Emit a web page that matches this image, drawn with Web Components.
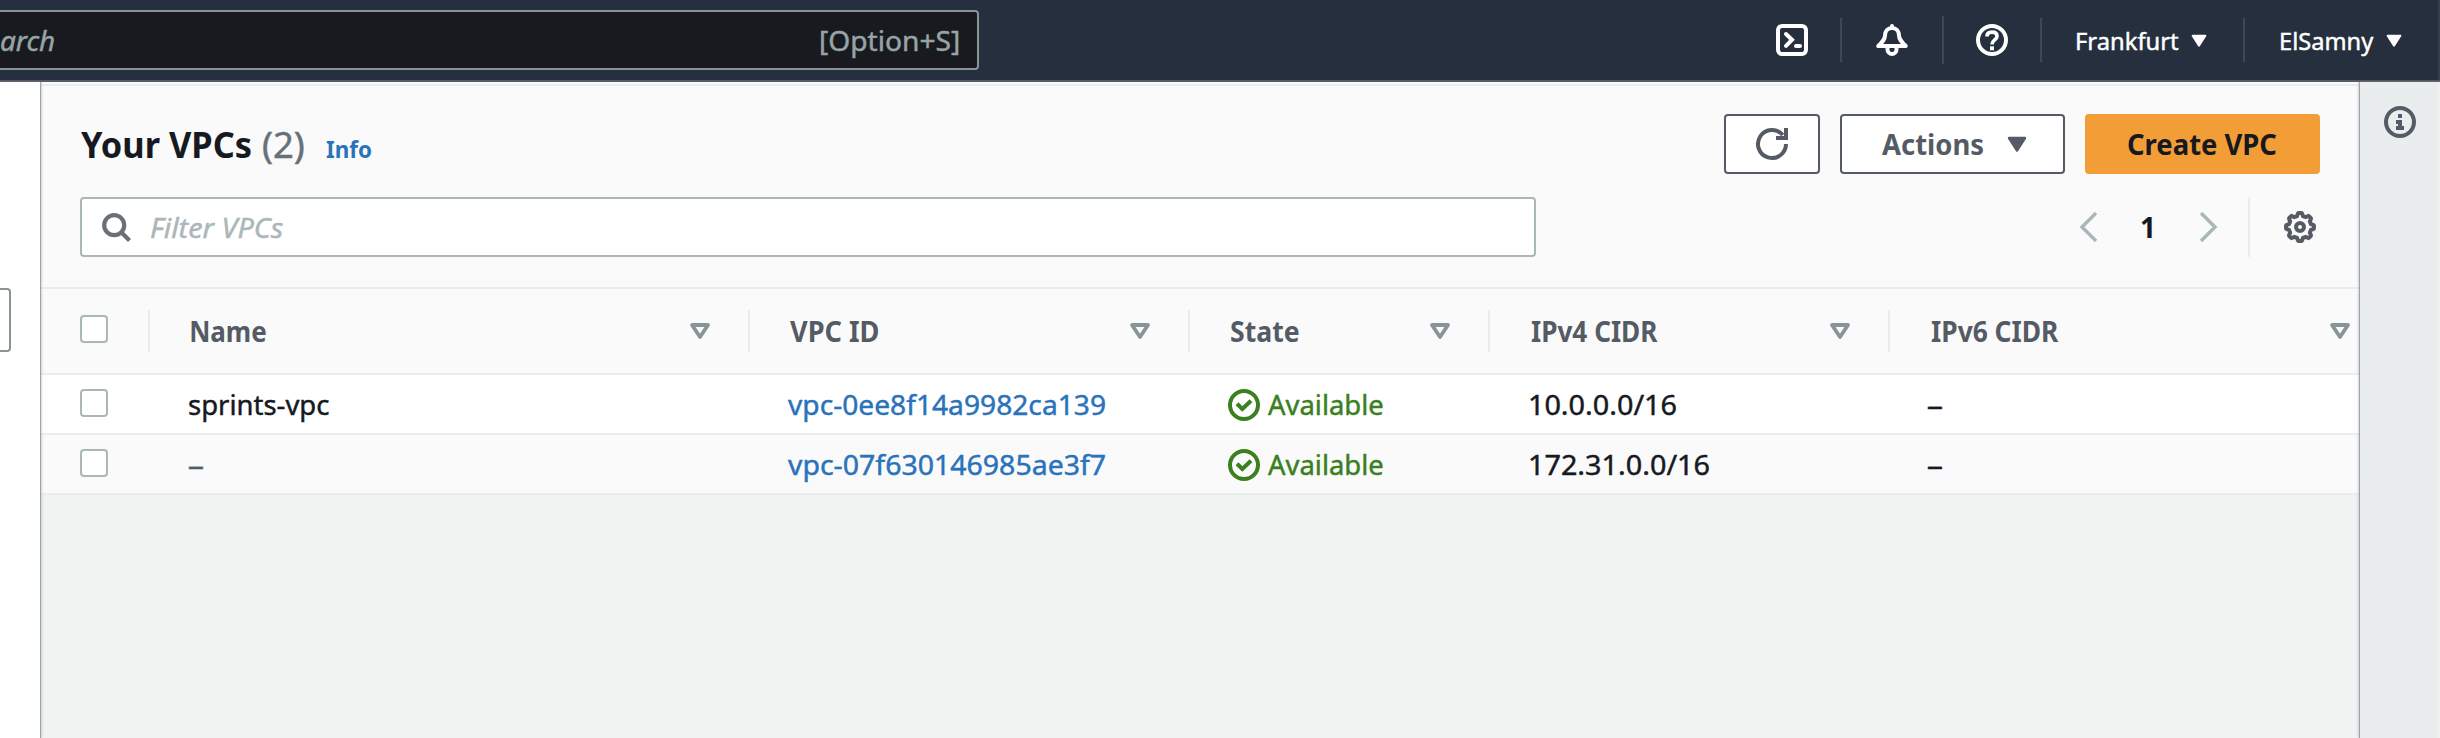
<!DOCTYPE html>
<html lang="en"><head><meta charset="utf-8"><title>Your VPCs</title>
<style>
html,body{margin:0;height:100%;overflow:hidden}
body{font-family:"Noto Sans","Open Sans",sans-serif;font-size:28px;color:#16191f}
</style></head><body>
<vpc-console></vpc-console>
<script>
const define=(name,html,setup)=>customElements.define(name,class extends HTMLElement{
  connectedCallback(){
    if(this.shadowRoot)return;
    const t=document.createElement('template');
    t.innerHTML=html;
    this.attachShadow({mode:'open'}).appendChild(t.content.cloneNode(true));
    if(setup)setup(this,this.shadowRoot);
  }
});

// Text run set to a given ink width.
const ctx=document.createElement('canvas').getContext('2d');
define('ui-text',`<style>:host{display:block;flex:none;white-space:pre}span{display:inline-block;transform-origin:0 0}.regular{-webkit-text-stroke:.45px currentColor}</style><span><slot></slot></span>`,(el,root)=>{
  const cs=getComputedStyle(el),w=+el.getAttribute('w'),span=root.querySelector('span');
  ctx.font=`${cs.fontStyle} ${cs.fontWeight} ${cs.fontSize} ${cs.fontFamily}`;
  const m=ctx.measureText(el.textContent),l=m.actualBoundingBoxLeft,s=w/(l+m.actualBoundingBoxRight);
  el.style.width=w+'px';
  span.style.transform=`translateX(${l*s}px) scaleX(${s})`;
  if(+cs.fontWeight<600)span.className='regular';
});

const gear=(()=>{
  let d='';
  for(let i=0;i<96;i++){
    const a=i/96*2*Math.PI,c=Math.cos(8*a),r=12.6+1.4*Math.tanh(2.6*c)/Math.tanh(2.6);
    d+=(i?'L':'M')+(16+r*Math.sin(a)).toFixed(2)+' '+(16-r*Math.cos(a)).toFixed(2);
  }
  return d+'Z';
})();
const icons={
  terminal:'<rect x="2" y="2" width="28" height="28" rx="4"/><path d="M10 10l6 5.8-6 6" stroke-linecap="round"/><path d="M20 22h4" stroke-linecap="round"/>',
  bell:'<path d="M16 2v2" stroke-linecap="round"/><path d="M16 4C11.6 4 9.2 7.3 9.1 11 9 15.5 6.2 18.2 2.2 22H29.8C25.8 18.2 23 15.5 22.9 11 22.8 7.3 20.4 4 16 4Z" stroke-linejoin="round"/><path d="M11.5 23v2.5a4.5 4.5 0 0 0 9 0V23"/>',
  help:'<circle cx="16" cy="16" r="14"/><path d="M11 12.4C11 9.6 13 8.1 16 8.1s5 1.5 5 4.1c0 3.8-5 3.6-5 8.2" stroke-width="3.7"/><path d="M14 24.3h4"/>',
  refresh:'<path d="M30 16A14 14 0 1 1 26.8 7.1"/><path d="M30 0v10H20"/>',
  search:'<circle cx="12.2" cy="12.2" r="10" stroke-width="4.2"/><path d="M19 19l8.5 8.5" stroke-width="4.2"/>',
  left:'<path d="M17 2L3 16l14 14" stroke-width="3.4"/>',
  right:'<path d="M2 2l14 14L2 30" stroke-width="3.4"/>',
  gear:`<path d="${gear}"/><circle cx="16" cy="16" r="4"/>`,
  info:'<circle cx="16" cy="16" r="14"/><path d="M14 8h4v4h-4zM12 14h6v6h2v4h-8v-4h2v-2h-2z" fill="currentColor" stroke="none"/>',
  check:'<circle cx="16" cy="16" r="14"/><path d="M9 14.8l5.3 5.2 8.7-8.3"/>',
  caret:'<path d="M2 2h16l-8 12.5z" fill="currentColor" stroke-width="2.4" stroke-linejoin="round"/>',
  sort:'<path d="M2 2h16l-8 12z" stroke-linejoin="round" stroke-width="3.8"/>'
};
define('ui-icon',`<style>:host{display:block;flex:none;width:32px;height:32px}svg{display:block;width:100%;height:100%;overflow:visible}</style><svg fill="none" stroke="currentColor" stroke-width="4"></svg>`,(el,root)=>{
  const n=el.getAttribute('name'),svg=root.querySelector('svg');
  svg.setAttribute('viewBox',{caret:'0 0 20 16',sort:'0 0 20 16',left:'0 0 20 32',right:'0 0 20 32'}[n]||'0 0 32 32');
  svg.innerHTML=icons[n];
});

define('ui-checkbox','<style>:host{display:block;box-sizing:border-box;width:28px;height:28px;border:2px solid #aab7b8;border-radius:4px;background:#fff}</style>');

define('ui-button','<style>:host{display:flex;box-sizing:border-box;height:60px;border:2px solid #545b64;border-radius:4px;background:#fff;color:#545b64;font-weight:700;align-items:center;line-height:54px}:host([primary]){background:#f39d37;border-color:#f39d37;color:#16191f}</style><slot></slot>');

define('console-nav',`<style>
:host{display:flex;box-sizing:border-box;height:82px;background:#252f3e;border-bottom:2px solid #545b64;align-items:center;color:#fff;font-size:24px;position:relative}
.search{box-sizing:border-box;width:979px;height:60px;border:2px solid #879596;border-left:0;border-radius:0 4px 4px 0;background:#191a1f;color:#95a5a6;font-size:28px;display:flex;justify-content:space-between;align-items:center;padding-right:19px}
.search i{margin-left:.5px}
.grow{flex:1}
b{width:2px;height:44px;background:#414750;flex:none}
.caret{width:16px;height:13px}
.edge{position:absolute;right:0;top:0;width:2px;height:80px;background:#36404d}
</style>
<div class="search"><i><ui-text w="53">arch</ui-text></i><ui-text w="137">[Option+S]</ui-text></div>
<div class="grow"></div>
<ui-icon name="terminal"></ui-icon><b style="margin:0 34px 0 32px"></b>
<ui-icon name="bell"></ui-icon><b style="margin:0 32px 0 34px;height:48px"></b>
<ui-icon name="help"></ui-icon><b style="margin:0 35px 0 32px"></b>
<ui-text w="102">Frankfurt</ui-text><ui-icon class="caret" name="caret" style="margin-left:12px"></ui-icon><b style="margin:0 36px"></b>
<ui-text w="93">ElSamny</ui-text><ui-icon class="caret" name="caret" style="margin:0 38px 0 12px"></ui-icon>
<div class="edge"></div>`);

define('console-side','<style>:host{display:flow-root;width:40px;flex:none;background:#fff;box-shadow:1px 0 1px #9aa5ab,2px 0 3px #0000001c;position:relative;z-index:1}div{box-sizing:border-box;width:11px;height:64px;margin-top:206px;border:2px solid #879596;border-left:0;border-radius:0 4px 4px 0}</style><div></div>');
define('console-help','<style>:host{display:flow-root;box-sizing:border-box;width:80px;flex:none;background:#eaeded;box-shadow:-1px 0 1px #9aa5ab,-2px 0 3px #0000001c;position:relative;z-index:1;color:#545b64;border-right:2px solid #f0f2f2}ui-icon{margin:24px 0 0 24px}</style><ui-icon name="info"></ui-icon>');

define('vpc-toolbar',`<style>
:host{display:flow-root;box-sizing:border-box;height:203px;background:#fafafa;padding:28px 40px 0;border-bottom:2px solid #eaeded}
.top,.bottom,.title,.right,.filter{display:flex;align-items:center}
.top,.bottom{justify-content:space-between;height:60px}
.bottom{margin-top:23px}
.title{align-items:baseline;font-size:36px;line-height:56px;padding:5px 0 0 1px}
.count{color:#687078;margin:0 22px 0 12px}
.info{font-size:24px;font-weight:700;color:#2a73bb}
.filter{box-sizing:border-box;width:1456px;height:60px;border:2px solid #aab7b8;border-radius:4px;background:#fff;color:#aab7b8;font-style:italic;padding-left:20px}
.filter ui-icon{color:#687078;margin:4px 17px 0 0}
.buttons{gap:20px}
.chev{width:20px;height:32px;color:#aab7b8}
.sep{width:2px;height:60px;background:#eaeded}
</style>
<div class="top"><div class="title"><ui-text w="170" style="font-weight:700">Your VPCs</ui-text><ui-text class="count" w="41">(2)</ui-text><ui-text class="info" w="45">Info</ui-text></div>
<div class="right buttons"><ui-button style="width:96px;justify-content:center;color:#545b64"><ui-icon name="refresh"></ui-icon></ui-button>
<ui-button style="width:225px;padding-left:40px"><ui-text w="101">Actions</ui-text><ui-icon name="caret" style="width:20px;height:16px;margin-left:24px"></ui-icon></ui-button>
<ui-button primary style="width:235px;padding-left:41px"><ui-text w="149">Create VPC</ui-text></ui-button></div></div>
<div class="bottom"><div class="filter"><ui-icon name="search"></ui-icon><ui-text w="132">Filter VPCs</ui-text></div>
<div class="right"><ui-icon class="chev" name="left"></ui-icon><ui-text w="11" style="font-weight:700;margin:0 47px 0 42px;line-height:56px">1</ui-text><ui-icon class="chev" name="right"></ui-icon><div class="sep" style="margin:0 34px 0 29px"></div><ui-icon name="gear" style="margin-right:4px;color:#545b64"></ui-icon></div></div>`);

const head=(t,w,pl,pr=38)=>`<div class="h" style="padding:0 ${pr}px 0 ${pl}px"><ui-text w="${w}">${t}</ui-text><ui-icon name="sort"></ui-icon></div>`;
const row=(name,id,cidr,cw,alt)=>`<div class="row ${alt?'alt':''}"><div class="cb"><ui-checkbox></ui-checkbox></div>
<div class="c" style="padding-left:38.5px">${name}</div><div class="c" style="padding-left:38px;color:#2a73bb"><ui-text w="317">${id}</ui-text></div>
<div class="c ok"><ui-icon name="check"></ui-icon><ui-text w="115">Available</ui-text></div>
<div class="c" style="padding-left:40px"><ui-text w="${cw}">${cidr}</ui-text></div><div class="c" style="padding-left:38px"><ui-text w="14">–</ui-text></div></div>`;
define('vpc-table',`<style>
:host{display:block}
.row{display:grid;grid-template-columns:110px 600px 440px 300px 400px 470px;height:58px;background:#fff;border-bottom:2px solid #eaeded}
.alt,.head{background:#fafafa}
.head{height:84px;color:#545b64;font-weight:700}
.cb{padding:14px 0 0 40px}
.h,.c{display:flex;align-items:center}
.h{justify-content:space-between;height:42px;margin-top:21px;line-height:40px}
.head>div:not(:last-child){border-right:2px solid #eaeded}
.head .cb{margin-top:21px;padding-top:5px;height:37px}
.h ui-icon{width:20px;height:16px;color:#879596}
.ok{padding-left:38px;color:#3b7f1f;gap:8px}
.ok ui-icon{margin-top:2px}
</style>
<div class="row head"><div class="cb"><ui-checkbox></ui-checkbox></div>${head('Name',75,41)}${head('VPC ID',88,40)}${head('State',68,40.5)}${head('IPv4 CIDR',127,41)}${head('IPv6 CIDR',128,40.5,10)}</div>
${row('<ui-text w="140">sprints-vpc</ui-text>','vpc-0ee8f14a9982ca139','10.0.0.0/16',146)}
${row('<ui-text w="14" style="color:#545b64">–</ui-text>','vpc-07f630146985ae3f7','172.31.0.0/16',179,1)}`);

define('vpc-console',`<style>
:host{display:flex;flex-direction:column;height:738px;width:2440px;overflow:hidden}
.body{display:flex;flex:1;min-height:0}
main{flex:1;min-width:0;background:#f1f3f3}
.line{height:2px;background:#eaeded;border-top:2px solid #fafafa}
</style>
<console-nav></console-nav>
<div class="body"><console-side></console-side><main><div class="line"></div><vpc-toolbar></vpc-toolbar><vpc-table></vpc-table></main><console-help></console-help></div>`);
</script></body></html>
